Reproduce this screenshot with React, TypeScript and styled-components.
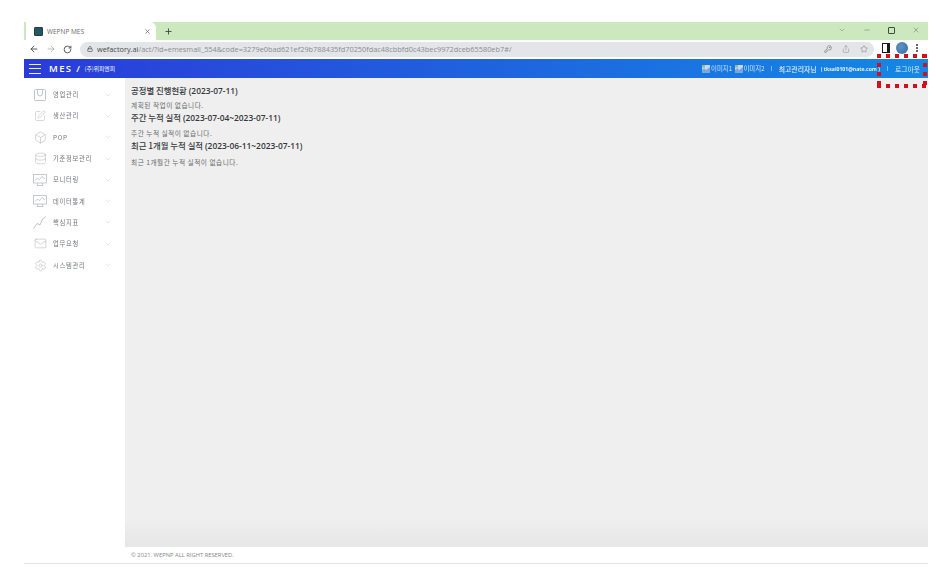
import styled, { createGlobalStyle } from "styled-components";
import {
    ArrowLeft,
    ArrowRight,
    Box,
    ChevronDown,
    Database,
    KeyRound,
    Lock,
    Mail,
    Minus,
    Plus,
    RotateCw,
    Settings,
    Share,
    SquarePen,
    Star,
    X,
} from "lucide-react";
import type { ReactNode } from "react";

const GlobalStyle = createGlobalStyle`
    html, body {
        margin: 0;
        padding: 0;
        background: #ffffff;
    }
    body {
        font-family: "Noto Sans CJK KR", "Noto Sans", sans-serif;
    }
`;

const Page = styled.div`
    width: 936px;
    height: 573px;
    box-sizing: border-box;
    padding: 22px 8px 9px 24px;
    overflow: hidden;
    filter: blur(0.35px);
`;

const Frame = styled.div`
    position: relative;
    display: flex;
    flex-direction: column;
    height: 100%;
    border-bottom: 1px solid #e6e6e6;
    box-sizing: border-box;
`;

const TabStrip = styled.div`
    display: flex;
    align-items: flex-end;
    height: 18px;
    background: #cbe8bf;
    flex-shrink: 0;
`;

const Tab = styled.div`
    display: flex;
    align-items: center;
    width: 132px;
    height: 18px;
    box-sizing: border-box;
    padding: 0 5px 0 8px;
    background: #ffffff;
    border-left: 2px solid #cbe8bf;
    border-radius: 0 6px 0 0;
    gap: 4px;
`;

const Favicon = styled.span`
    width: 9px;
    height: 9px;
    border-radius: 1px;
    background: #1f5a63;
    border: 1px solid #2b3a40;
    box-sizing: border-box;
    flex-shrink: 0;
`;

const TabTitle = styled.span`
    flex: 1;
    font-family: "Open Sans", sans-serif;
    font-size: 6.5px;
    color: #6a6a6a;
`;

const NewTab = styled.span`
    display: flex;
    align-items: center;
    margin: 0 0 4px 8px;
    color: #3c4a3c;
`;

const WindowControls = styled.div`
    display: flex;
    align-items: center;
    gap: 17px;
    margin: 0 8px 6px auto;
    color: #5d6b5d;
`;

const RestoreIcon = styled.span`
    width: 7px;
    height: 7px;
    border: 1px solid #3f4a3f;
    box-sizing: border-box;
    border-radius: 1px;
`;

const Toolbar = styled.div`
    display: flex;
    align-items: center;
    height: 18px;
    padding-bottom: 1px;
    background: #ffffff;
    flex-shrink: 0;
`;

const NavButtons = styled.div`
    display: flex;
    align-items: center;
    gap: 7px;
    padding: 0 8px 0 5px;
    color: #4a4d50;
`;

const UrlBar = styled.div`
    display: flex;
    align-items: center;
    flex: 1;
    height: 15px;
    padding: 0 6px 0 7px;
    gap: 4px;
    background: #e3e5e8;
    border-radius: 8px;
    color: #5f6368;
    min-width: 0;
`;

const UrlText = styled.span`
    flex: 1;
    font-family: "Open Sans", sans-serif;
    font-size: 7.35px;
    color: #8a8d91;
    white-space: nowrap;
    overflow: hidden;

    b {
        font-weight: 400;
        color: #45484c;
    }
`;

const UrlActions = styled.div`
    display: flex;
    align-items: center;
    gap: 10px;
    color: #6a6d70;
`;

const ToolbarRight = styled.div`
    display: flex;
    align-items: center;
    gap: 6px;
    padding: 0 8px 2px 8px;
`;

const SidePanelIcon = styled.span`
    width: 8px;
    height: 10px;
    border: 1.5px solid #1a1a1a;
    border-right-width: 3px;
    box-sizing: border-box;
`;

const Avatar = styled.span`
    width: 12px;
    height: 12px;
    border-radius: 50%;
    background: radial-gradient(circle at 40% 40%, #5b93c9, #3a6a95);
`;

const MenuDots = styled.span`
    width: 2px;
    height: 2px;
    margin: 0 2px;
    border-radius: 50%;
    background: #333333;
    box-shadow: 0 -3px 0 #333333, 0 3px 0 #333333;
`;

const AppHeader = styled.header`
    display: flex;
    align-items: center;
    height: 19px;
    flex-shrink: 0;
    padding: 0 8px 0 5px;
    background: linear-gradient(90deg, #2b3bd9 0%, #1f62de 50%, #1488e4 100%);
    color: #ffffff;
`;

const Hamburger = styled.span`
    position: relative;
    width: 12px;
    height: 8px;
    margin-right: 8px;
    border-top: 1px solid #e8edff;
    border-bottom: 1px solid #e8edff;

    &::after {
        content: "";
        position: absolute;
        left: 0;
        right: 0;
        top: 3.5px;
        height: 1px;
        background: #e8edff;
    }
`;

const Brand = styled.span`
    font-family: "Open Sans", sans-serif;
    font-size: 9.5px;
    font-weight: 600;
    letter-spacing: 1.4px;
    white-space: pre;
`;

const Company = styled.span`
    font-size: 5.8px;
    margin-left: 3px;
`;

const HeaderRight = styled.div`
    display: flex;
    align-items: center;
    margin-left: auto;
    font-size: 6.4px;
    color: #cfe4fb;
`;

const BrokenImage = styled.span`
    display: inline-flex;
    align-items: center;
    margin-right: 3px;
    gap: 0.5px;
`;

const Divider = styled.span<{ $left: number }>`
    width: 1px;
    height: 5px;
    margin: 0 7px 0 ${(props) => props.$left}px;
    background: #7db8ee;
`;

const UserName = styled.span`
    font-size: 6.9px;
    font-weight: 500;
    color: #e6f1fd;
`;

const UserMail = styled.span`
    font-family: "Open Sans", sans-serif;
    font-size: 5.15px;
    font-weight: 700;
    color: #e6f1fd;
    margin-left: 4px;
`;

const Logout = styled.span`
    font-size: 6.8px;
    color: #d8e9fc;
`;

const Body = styled.div`
    display: flex;
    flex: 1;
    min-height: 0;
`;

const Sidebar = styled.nav`
    width: 101px;
    flex-shrink: 0;
    padding-top: 6px;
    background: #ffffff;
    box-sizing: border-box;
`;

const MenuRow = styled.div`
    display: flex;
    align-items: center;
    height: 21.3px;
    padding: 0 13px 0 9px;
    color: #b0b4b9;
`;

const MenuIcon = styled.span`
    display: flex;
    justify-content: center;
    width: 14px;
    margin-right: 6px;
`;

const MenuLabel = styled.span`
    flex: 1;
    font-size: 6.3px;
    letter-spacing: 0.7px;
    color: #74787d;
`;

const Main = styled.div`
    display: flex;
    flex-direction: column;
    flex: 1;
    min-width: 0;
`;

const Content = styled.main`
    flex: 1;
    padding: 6px 6px 0;
    background: linear-gradient(180deg, #efefef 0%, #efefef 94%, #e6e6e6 100%);
`;

const SectionTitle = styled.h2`
    margin: 0;
    height: 12px;
    line-height: 12px;
    font-size: 8.4px;
    font-weight: 500;
    color: #33373b;
    white-space: nowrap;

    span {
        font-family: "Open Sans", sans-serif;
        font-weight: 600;
    }
`;

const EmptyText = styled.p<{ $first: boolean }>`
    margin: ${(props) => (props.$first ? "3.5px" : "5.5px")} 0 0;
    height: 11px;
    line-height: 11px;
    font-size: 6.7px;
    letter-spacing: 0.48px;
    color: #6b6b6b;
    white-space: nowrap;
`;

const Footer = styled.footer`
    display: flex;
    align-items: center;
    height: 16px;
    flex-shrink: 0;
    padding: 0 6px;
    background: #ffffff;
    font-family: "Open Sans", sans-serif;
    font-size: 5.8px;
    color: #85888c;
`;

const Highlight = styled.div`
    position: absolute;
    right: 1px;
    top: 32px;
    width: 50px;
    height: 34px;
    background:
        repeating-linear-gradient(90deg, #d0101c 0 4px, transparent 4px 9px) top / 100% 4px no-repeat,
        repeating-linear-gradient(90deg, #d0101c 0 4px, transparent 4px 9px) bottom / 100% 4px no-repeat,
        repeating-linear-gradient(180deg, #d0101c 0 4px, transparent 4px 9px) left / 4px 100% no-repeat,
        repeating-linear-gradient(180deg, #d0101c 0 4px, transparent 4px 9px) right / 4px 100% no-repeat;
`;

const strokeThin = 1;

function BagIcon() {
    return (
        <svg width="12" height="12" viewBox="0 0 12 12" fill="none" stroke="currentColor" strokeWidth="0.8">
            <rect x="0.5" y="0.5" width="11" height="11" rx="1" />
            <path d="M3.5 1v3.5a2.5 2.5 0 0 0 5 0V1" />
        </svg>
    );
}

function MonitorChartIcon() {
    return (
        <svg width="14" height="12" viewBox="0 0 14 12" fill="none" stroke="currentColor" strokeWidth="0.7">
            <rect x="0.5" y="0.5" width="13" height="8.5" />
            <path d="M2 6.5l2.5-2.5 2 1.5 2.5-3 3 2.5" />
            <path d="M5 9l-1 2.5h6L9 9" />
        </svg>
    );
}

function TrendIcon() {
    return (
        <svg width="14" height="13" viewBox="0 0 14 13" fill="none" stroke="currentColor" strokeWidth="0.8">
            <path d="M0.5 12.5l3.5-5 3 1.5 2.5-6 3.5-2.5" />
        </svg>
    );
}

function BrokenImageIcon() {
    return (
        <svg width="8" height="8" viewBox="0 0 8 8">
            <rect width="8" height="8" fill="#c9d8ee" />
            <path d="M0 8V5l2-2 2 2 4-3v6z" fill="#7aa7e0" />
            <rect x="0" y="0" width="3" height="2.5" fill="#8fc08a" />
        </svg>
    );
}

const MENU: { label: string; icon: ReactNode }[] = [
    { label: "영업관리", icon: <BagIcon /> },
    { label: "생산관리", icon: <SquarePen size={12} strokeWidth={strokeThin} /> },
    { label: "POP", icon: <Box size={13} strokeWidth={strokeThin} /> },
    { label: "기준정보관리", icon: <Database size={13} strokeWidth={strokeThin} /> },
    { label: "모니터링", icon: <MonitorChartIcon /> },
    { label: "데이터통계", icon: <MonitorChartIcon /> },
    { label: "핵심지표", icon: <TrendIcon /> },
    { label: "업무요청", icon: <Mail size={13} strokeWidth={strokeThin} /> },
    { label: "시스템관리", icon: <Settings size={13} strokeWidth={strokeThin} /> },
];

const SECTIONS = [
    { title: "공정별 진행현황", range: "(2023-07-11)", empty: "계획된 작업이 없습니다." },
    { title: "주간 누적 실적", range: "(2023-07-04~2023-07-11)", empty: "주간 누적 실적이 없습니다." },
    { title: "최근 1개월 누적 실적", range: "(2023-06-11~2023-07-11)", empty: "최근 1개월간 누적 실적이 없습니다." },
];

export default function App() {
    return (
        <Page>
            <GlobalStyle />
            <Frame>
                <TabStrip>
                    <Tab>
                        <Favicon />
                        <TabTitle>WEPNP MES</TabTitle>
                        <X size={7} color="#444" strokeWidth={2} />
                    </Tab>
                    <NewTab>
                        <Plus size={9} strokeWidth={2.4} />
                    </NewTab>
                    <WindowControls>
                        <ChevronDown size={8} strokeWidth={1.2} />
                        <Minus size={8} strokeWidth={1.4} />
                        <RestoreIcon />
                        <X size={8} strokeWidth={1.4} />
                    </WindowControls>
                </TabStrip>
                <Toolbar>
                    <NavButtons>
                        <ArrowLeft size={10} strokeWidth={2.2} />
                        <ArrowRight size={10} strokeWidth={1.6} color="#9a9da0" />
                        <RotateCw size={9} strokeWidth={2.4} />
                    </NavButtons>
                    <UrlBar>
                        <Lock size={6} strokeWidth={3} />
                        <UrlText>
                            <b>wefactory.ai</b>/act/?id=emesmall_554&amp;code=3279e0bad621ef29b788435fd70250fdac48cbbfd0c43bec9972dceb65580eb7#/
                        </UrlText>
                        <UrlActions>
                            <KeyRound size={8} strokeWidth={1.8} />
                            <Share size={8} strokeWidth={1.2} />
                            <Star size={8} strokeWidth={1.4} />
                        </UrlActions>
                    </UrlBar>
                    <ToolbarRight>
                        <SidePanelIcon />
                        <Avatar />
                        <MenuDots />
                    </ToolbarRight>
                </Toolbar>
                <AppHeader>
                    <Hamburger />
                    <Brand>MES /</Brand>
                    <Company>(주)위피엔피</Company>
                    <HeaderRight>
                        <BrokenImage>
                            <BrokenImageIcon />
                            이미지1
                        </BrokenImage>
                        <BrokenImage>
                            <BrokenImageIcon />
                            이미지2
                        </BrokenImage>
                        <Divider $left={3} />
                        <UserName>최고관리자님</UserName>
                        <UserMail>( tksal0101@nate.com )</UserMail>
                        <Divider $left={7} />
                        <Logout>로그아웃</Logout>
                    </HeaderRight>
                </AppHeader>
                <Body>
                    <Sidebar>
                        {MENU.map((item) => (
                            <MenuRow key={item.label}>
                                <MenuIcon>{item.icon}</MenuIcon>
                                <MenuLabel>{item.label}</MenuLabel>
                                <ChevronDown size={8} strokeWidth={1} />
                            </MenuRow>
                        ))}
                    </Sidebar>
                    <Main>
                        <Content>
                            {SECTIONS.map((section, index) => (
                                <div key={section.title}>
                                    <SectionTitle>
                                        {section.title} <span>{section.range}</span>
                                    </SectionTitle>
                                    <EmptyText $first={index === 0}>{section.empty}</EmptyText>
                                </div>
                            ))}
                        </Content>
                        <Footer>© 2021. WEPNP ALL RIGHT RESERVED.</Footer>
                    </Main>
                </Body>
                <Highlight />
            </Frame>
        </Page>
    );
}
